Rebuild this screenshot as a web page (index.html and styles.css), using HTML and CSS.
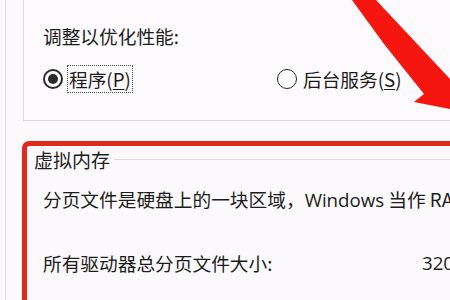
FILE: index.html
```html
<!DOCTYPE html>
<html lang="zh-CN">
<head>
<meta charset="utf-8">
<title>性能选项</title>
<link rel="stylesheet" href="styles.css">
</head>
<body>
<div class="window">
  <section class="perf">
    <div class="title">调整以优化性能:</div>
    <div class="radio-row">
      <label class="radio">
        <span class="circle checked"></span>
        <span class="focus">程序(<u>P</u>)</span>
      </label>
      <label class="radio">
        <span class="circle"></span>
        <span class="plain">后台服务(<u>S</u>)</span>
      </label>
    </div>
  </section>
  <section class="highlight">
    <div class="vm-head">
      <span class="legend">虚拟内存</span>
      <span class="rule"></span>
    </div>
    <div class="vm-body">
      <div class="line desc">分页文件是硬盘上的一块区域，<span class="latin">Windows</span> 当作 RAM 使用。</div>
      <div class="line total">
        <span>所有驱动器总分页文件大小:</span>
        <span class="latin">3200 MB</span>
      </div>
    </div>
  </section>
</div>
<svg class="arrow" width="450" height="300" viewBox="0 0 450 300" aria-hidden="true">
  <polygon points="352,0 376,0 450,79 450,109 414,102 424,94 384,44" fill="#f4160f"/>
</svg>
</body>
</html>
```

FILE: styles.css
```css
html, body {
  margin: 0;
  padding: 0;
  width: 450px;
  height: 300px;
  overflow: hidden;
}
body {
  position: relative;
  background: #fbf9fb;
  color: #1c1c1c;
  font-family: "Noto Sans CJK SC", "Noto Sans", sans-serif;
  font-size: 18.7px;
}
.latin {
  font-family: "Open Sans", "Noto Sans CJK SC", sans-serif;
}
.window {
  margin-left: 5px;
  height: 300px;
  border-left: 1px solid #e2e0e2;
  overflow: hidden;
}
.perf {
  margin-top: -10px;
  margin-left: 17px;
  margin-right: -20px;
  border: 1px solid #dcdadc;
  background: #fcfafc;
  padding: 32px 0 26px 19px;
}
.title {
  line-height: 26px;
  white-space: nowrap;
}
.radio-row {
  margin-top: 15px;
  display: grid;
  grid-template-columns: 234px auto;
  height: 30px;
  align-items: center;
}
.radio {
  display: inline-flex;
  align-items: center;
  white-space: nowrap;
}
.radio u {
  text-decoration-thickness: 1px;
  text-underline-offset: 2px;
}
.circle {
  box-sizing: border-box;
  width: 20px;
  height: 20px;
  border-radius: 50%;
  border: 1.5px solid #2a2a2a;
  background: #fdfdfd;
  display: inline-flex;
  align-items: center;
  justify-content: center;
  flex: none;
}
.circle.checked {
  border-width: 2px;
}
.circle.checked::after {
  content: "";
  width: 10px;
  height: 10px;
  border-radius: 50%;
  background: #2b2b2b;
}
.focus {
  margin-left: 4px;
  border: 1px dotted #505050;
  padding: 0 1px;
  line-height: 26px;
}
.plain {
  margin-left: 6px;
  line-height: 26px;
}
.highlight {
  margin-top: 20px;
  margin-left: 16px;
  margin-right: -40px;
  height: 200px;
  border: 5px solid #e2291d;
  border-radius: 7px;
  padding-left: 7px;
}
.vm-head {
  display: flex;
  align-items: center;
  height: 28px;
  gap: 4px;
}
.legend {
  font-size: 19px;
  line-height: 28px;
  white-space: nowrap;
}
.rule {
  flex: 1;
  height: 1px;
  background: #dddbdd;
  margin-top: -1px;
}
.vm-body {
  padding-left: 9px;
}
.line {
  line-height: 26px;
  white-space: nowrap;
}
.desc {
  margin-top: 12px;
}
.total {
  margin-top: 37px;
  display: grid;
  grid-template-columns: 379px auto;
}
.arrow {
  position: absolute;
  left: 0;
  top: 0;
  pointer-events: none;
}
```
